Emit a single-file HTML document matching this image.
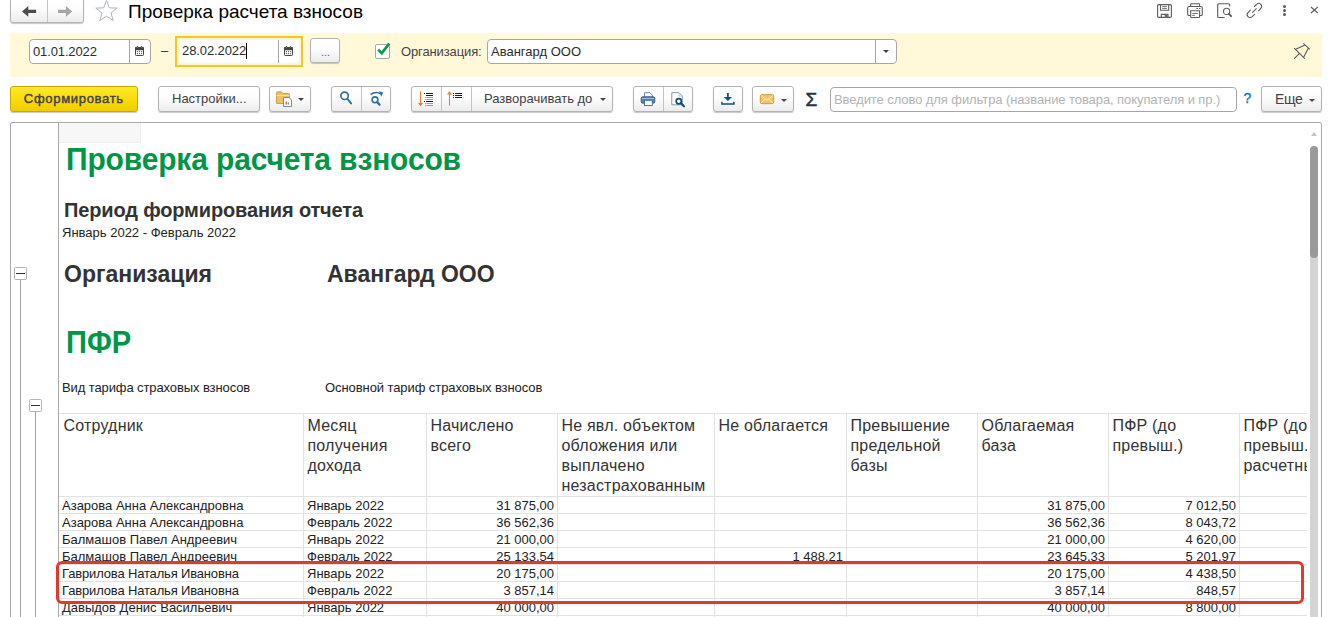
<!DOCTYPE html>
<html lang="ru">
<head>
<meta charset="utf-8">
<title>Проверка расчета взносов</title>
<style>
*{box-sizing:border-box;margin:0;padding:0}
html,body{width:1333px;height:617px;overflow:hidden;background:#fff}
body{position:relative;font-family:"Liberation Sans",Arial,sans-serif;font-size:13px;color:#333}
.abs{position:absolute}
.btn{position:absolute;border:1px solid #b3b3b3;border-radius:3px;background:linear-gradient(#ffffff 0%,#fdfdfd 45%,#ececec 100%);box-shadow:0 1px 1px rgba(0,0,0,.22);color:#3f3f3f;white-space:nowrap}
.btn .sep{position:absolute;top:0;bottom:0;width:1px;background:#c4c4c4}
.inp{position:absolute;background:#fff;border:1px solid #a6a6a6;border-radius:4px;white-space:nowrap}
.inp .sep{position:absolute;top:0;bottom:0;width:1px;background:#a6a6a6}
.txt{position:absolute;white-space:nowrap;line-height:16px}
.caret{position:absolute;width:0;height:0;border-left:3px solid transparent;border-right:3px solid transparent;border-top:3px solid #444}
svg{position:absolute;overflow:visible}
.h16{margin-left:-.5px;font-size:16px;line-height:20px;color:#333;position:absolute;white-space:nowrap;letter-spacing:.2px}
.row{position:absolute;left:59px;height:17px;width:1249px;border-bottom:1px solid #e2e2e2}
.c{position:absolute;top:1px;line-height:16px;font-size:13px;color:#222;white-space:nowrap}
.r{text-align:right}
.vl{position:absolute;width:1px;background:#e2e2e2;top:413px;height:204px}
</style>
</head>
<body>

<!-- title bar -->
<div class="btn" style="left:10px;top:-4px;width:74px;height:27px"><div class="sep" style="left:36px"></div>
<svg style="left:0;top:0" width="72" height="25" viewBox="0 0 72 25"><path d="M11 14.400 L17.300 9 L17.300 12.700 L25.100 12.700 L25.100 16.100 L17.300 16.100 L17.300 19.800 Z" fill="#4d4d4d"/><path d="M61.200 14.400 L54.900 9 L54.900 12.700 L47 12.700 L47 16.100 L54.900 16.100 L54.900 19.800 Z" fill="#a6a6a6"/></svg>
</div>
<svg style="left:94px;top:-.7px" width="25" height="23" viewBox="0 0 25 23"><path d="M12.5 1.5 L15.3 8.8 L23.2 9.1 L17 14 L19.2 21.5 L12.5 17.2 L5.8 21.5 L8 14 L1.8 9.1 L9.7 8.8 Z" fill="none" stroke="#aab4bf" stroke-width="1" stroke-linejoin="miter"/></svg>
<div class="txt" style="left:128px;top:0px;font-size:19px;line-height:24px;color:#000">Проверка расчета взносов</div>

<!-- top right icons -->
<svg id="ic-save" style="left:1157px;top:4px" width="15" height="14" viewBox="0 0 15 14" fill="none" stroke="#5c5c5c" stroke-width="1.1"><path d="M1.800 .6 H13.200 Q14.400 .6 14.400 1.800 V12.200 Q14.400 13.400 13.200 13.400 H1.800 Q.6 13.400 .6 12.200 V1.800 Q.6 .6 1.800 .6 Z"/><path d="M3.500 .6 V6.300 H11.700 V.6"/><path d="M5.200 2.600 H9.900 M5.200 4.400 H9.900" stroke-width=".9"/><path d="M4.300 13.400 V10.400 H11 V13.400"/><rect x="7.700" y="10.800" width="2.900" height="2.600" fill="#6a6a6a" stroke="none"/></svg>
<svg id="ic-print" style="left:1187px;top:3px" width="16" height="15" viewBox="0 0 16 15" fill="none" stroke="#5c5c5c" stroke-width="1.1"><path d="M3.700 3.400 V1.100 Q3.700 .7 4.100 .7 H12.200 Q12.600 .7 12.600 1.100 V3.400"/><path d="M3.700 12.500 H2 Q.7 12.500 .7 11.200 V4.800 Q.7 3.500 2 3.500 H14 Q15.300 3.500 15.300 4.800 V11.200 Q15.300 12.500 14 12.500 H12.600"/><path d="M3.700 7.700 H12.600 V13.700 Q12.600 14.500 11.800 14.500 H4.500 Q3.700 14.500 3.700 13.700 Z"/><path d="M5.300 10.500 H10.800 M5.300 12.400 H7.900" stroke-width=".9"/><path d="M9.400 5.500 H11 M12 5.500 H13.500" stroke-width=".9"/></svg>
<svg id="ic-prev" style="left:1217px;top:3px" width="15" height="15" viewBox="0 0 15 15" fill="none" stroke="#5c5c5c" stroke-width="1.1"><path d="M12.700 3.400 V1.700 Q12.700 .7 11.700 .7 H1.700 Q.7 .7 .7 1.700 V13.500 Q.7 14.500 1.700 14.500 H7.600"/><circle cx="9.600" cy="8.400" r="3.100"/><path d="M12 10.900 L14.100 13.100" stroke-width="2" stroke-linecap="round"/></svg>
<svg id="ic-link" style="left:1246px;top:2px" width="17" height="17" viewBox="0 0 17 17" fill="none" stroke="#585858" stroke-width="1.15" stroke-linecap="round"><g transform="translate(8.500 8.500) scale(.93) translate(-8.500 -8.300)"><path d="M8.300 4 L10.900 1.600 A3.100 3.100 0 0 1 15.300 6 L12.900 8.600"/><path d="M4.100 7.900 L1.600 10.500 A3.100 3.100 0 0 0 6 14.900 L8.700 12.500"/><path d="M6.400 10.400 L10.500 6.400"/></g></svg>
<svg id="ic-dots" style="left:1282px;top:4px" width="5" height="13" viewBox="0 0 5 13"><circle cx="2.500" cy="2.500" r="1.500" fill="#5c5c5c"/><circle cx="2.500" cy="6.500" r="1.500" fill="#5c5c5c"/><circle cx="2.500" cy="10.600" r="1.500" fill="#5c5c5c"/></svg>
<svg id="ic-close" style="left:1310px;top:6px" width="9" height="8" viewBox="0 0 9 8" stroke="#5c5c5c" stroke-width="1.1" fill="none"><path d="M1 1 L7.800 7 M7.800 1 L1 7"/></svg>

<!-- yellow band -->
<div class="abs" style="left:10px;top:33px;width:1312px;height:44px;background:#fff9da"></div>

<div class="inp" style="left:29px;top:39px;width:122px;height:25px"><div class="sep" style="left:99px"></div>
<div class="txt" style="left:3px;top:4px;color:#2b2b2b;letter-spacing:-.13px">01.01.2022</div>
<svg class="cal" style="left:105px;top:6px" width="9" height="10" viewBox="0 0 9 10"><rect x=".5" y="1.600" width="8" height="7.900" rx=".8" fill="#fff" stroke="#444" stroke-width="1"/><rect x="0" y="1.200" width="9" height="3" fill="#444"/><rect x="1.700" y="0" width="1.500" height="2" rx=".7" fill="#444"/><rect x="5.800" y="0" width="1.500" height="2" rx=".7" fill="#444"/><circle cx="2.450" cy="1.100" r=".4" fill="#fff"/><circle cx="6.550" cy="1.100" r=".4" fill="#fff"/><g fill="#444"><circle cx="2.400" cy="5.600" r=".6"/><circle cx="4.500" cy="5.600" r=".6"/><circle cx="6.600" cy="5.600" r=".6"/><circle cx="2.400" cy="7.600" r=".6"/><circle cx="4.500" cy="7.600" r=".6"/><circle cx="6.600" cy="7.600" r=".6"/></g></svg>
</div>
<div class="txt" style="left:161px;top:43px;color:#333">–</div>

<div class="abs" style="left:175px;top:36px;width:128px;height:31px;border:2px solid #f8c622;background:#fef6d2"></div>
<div class="abs" style="left:179px;top:40px;width:120px;height:23px;background:#fff;border-radius:3px"><div class="abs" style="left:99px;top:0;bottom:0;width:1px;background:#a6a6a6"></div>
<div class="txt" style="left:3px;top:3px;color:#2b2b2b;letter-spacing:-.1px">28.02.2022</div>
<div class="abs" style="left:67px;top:3px;width:1px;height:16px;background:#000"></div>
<svg class="cal" style="left:105px;top:6px" width="9" height="10" viewBox="0 0 9 10"><rect x=".5" y="1.600" width="8" height="7.900" rx=".8" fill="#fff" stroke="#444" stroke-width="1"/><rect x="0" y="1.200" width="9" height="3" fill="#444"/><rect x="1.700" y="0" width="1.500" height="2" rx=".7" fill="#444"/><rect x="5.800" y="0" width="1.500" height="2" rx=".7" fill="#444"/><circle cx="2.450" cy="1.100" r=".4" fill="#fff"/><circle cx="6.550" cy="1.100" r=".4" fill="#fff"/><g fill="#444"><circle cx="2.400" cy="5.600" r=".6"/><circle cx="4.500" cy="5.600" r=".6"/><circle cx="6.600" cy="5.600" r=".6"/><circle cx="2.400" cy="7.600" r=".6"/><circle cx="4.500" cy="7.600" r=".6"/><circle cx="6.600" cy="7.600" r=".6"/></g></svg>
</div>

<div class="btn" style="left:310px;top:38px;width:30px;height:25px"><div class="txt" style="left:10px;top:5px;font-size:11px;color:#666">...</div></div>

<div class="abs" style="left:375px;top:44px;width:15px;height:15px;background:#fff;border:1px solid #a6a6a6;border-radius:2px"></div>
<svg style="left:377px;top:42px" width="14" height="14" viewBox="0 0 14 14"><path d="M1.200 7.600 L4.800 11.200 L12.300 1.500" fill="none" stroke="#0b9a48" stroke-width="2.700"/></svg>
<div class="txt" style="left:401px;top:43.500px;color:#444;letter-spacing:-.12px">Организация:</div>
<div class="inp" style="left:487px;top:39px;width:410px;height:25px"><div class="sep" style="left:387px"></div>
<div class="txt" style="left:3px;top:4px;color:#2b2b2b">Авангард ООО</div>
<div class="caret" style="left:395px;top:10px"></div></div>

<svg id="ic-pin" style="left:1293px;top:43px" width="18" height="17" viewBox="0 0 18 17" fill="none" stroke="#5c5c5c" stroke-width="1.100"><path d="M10.300 .4 L16.800 6.400 M12.100 2 L2.200 6.400 M15.300 5.200 L10.300 14.800 M1.200 5.200 L11.800 15.600 M6.300 10.600 L1.200 15.600"/></svg>

<!-- toolbar -->
<div class="btn" style="left:10px;top:86px;width:128px;height:26px;border-color:#c9a900;background:linear-gradient(#ffe92e 0%,#fbdc07 50%,#f2cd00 100%);font-weight:normal;color:#3f4452"><div class="txt" style="left:12.800px;top:4px;letter-spacing:.7px;-webkit-text-stroke:.45px #3f4452">Сформировать</div></div>
<div class="btn" style="left:158px;top:86px;width:102px;height:26px"><div class="txt" style="left:13px;top:4px">Настройки...</div></div>
<div class="btn" style="left:269px;top:86px;width:42px;height:26px"><div class="caret" style="left:28px;top:11px"></div>
<svg id="ic-folder" style="left:6px;top:4px" width="17" height="16" viewBox="0 0 17 16"><path d="M.5 2.500 Q.5 .8 2 .8 H5.500 L7 2.500 H12.500 Q13.500 2.500 13.500 3.500 V12.500 H.5 Z" fill="#ecc06a" stroke="#c8963c" stroke-width=".9"/><path d="M.5 4.500 H13.500" stroke="#f7dfa3" stroke-width="1"/><path d="M7.500 6.500 H13 L15.500 9 V15.500 H7.500 Z" fill="#fff" stroke="#6f7f92" stroke-width=".9"/><path d="M10.300 13.500 V10.500" stroke="#d9453c" stroke-width="1.200"/><path d="M12.300 13.500 V11.500" stroke="#3fa55a" stroke-width="1.200"/></svg></div>

<div class="btn" style="left:331px;top:86px;width:60px;height:26px"><div class="sep" style="left:29px"></div>
<svg id="ic-find" style="left:0;top:0" width="30" height="24" viewBox="0 0 30 24" fill="none" stroke="#2a70a8"><circle cx="12.600" cy="8.800" r="3.700" stroke-width="1.700"/><path d="M15.600 12 L19 16.400" stroke-width="2" stroke-linecap="round"/></svg>
<svg id="ic-find2" style="left:0;top:0" width="60" height="24" viewBox="0 0 60 24" fill="none" stroke="#2a70a8"><circle cx="43" cy="12.800" r="2.900" stroke-width="1.600"/><path d="M45.200 15.200 L47.600 17.600" stroke-width="2.200" stroke-linecap="round"/><path d="M38.600 7.700 Q43.500 3.600 48.800 6.800" stroke-width="1.500"/><path d="M46.800 4.300 L51.200 5.600 L49.300 9.600 Z" fill="#2a70a8" stroke="none"/></svg></div>

<div class="btn" style="left:411px;top:86px;width:202px;height:26px"><div class="sep" style="left:29px"></div><div class="sep" style="left:59px"></div>
<svg id="ic-s1" style="left:0;top:0" width="30" height="24" viewBox="0 0 30 24"><path d="M8.500 4.300 V17" stroke="#ee7a3f" stroke-width="1.100"/><path d="M5.900 16 L8.500 19.300 L11.100 16 Z" fill="#ee7a3f"/><path d="M14 6.500 H21 M14 8.500 H21 M14 14.500 H21" stroke="#1c1c1c" stroke-width="1"/><path d="M12 6.500 H13 M12 14.500 H13" stroke="#1c1c1c" stroke-width="1"/><path d="M15 10.500 H21 M15 12.500 H21 M15 16.500 H21 M15 18.500 H21" stroke="#9a9a9a" stroke-width="1"/><path d="M13.500 10.500 H14.300 M13.500 12.500 H14.300 M13.500 16.500 H14.300 M13.500 18.500 H14.300" stroke="#555" stroke-width="1"/></svg>
<svg id="ic-s2" style="left:0;top:0" width="60" height="24" viewBox="0 0 60 24"><path d="M37.500 6.500 V18.700" stroke="#ee7a3f" stroke-width="1.100"/><path d="M34.900 7.500 L37.500 4.200 L40.100 7.500 Z" fill="#ee7a3f"/><path d="M43 6.500 H50 M43 8.500 H50 M43 10.500 H50" stroke="#1c1c1c" stroke-width="1"/><path d="M41 6.500 H42 M41 8.500 H42 M41 10.500 H42" stroke="#1c1c1c" stroke-width="1"/></svg>
<div class="txt" style="left:72px;top:4px">Разворачивать до</div><div class="caret" style="left:188px;top:11px"></div></div>

<div class="btn" style="left:633px;top:86px;width:60px;height:26px"><div class="sep" style="left:29px"></div>
<svg id="ic-p1" style="left:0;top:0" width="30" height="24" viewBox="0 0 30 24"><path d="M10.500 10 V5.700 H16 L18.300 8 V10" fill="#fff" stroke="#5b7fa8" stroke-width=".9"/><rect x="7.200" y="9.800" width="13.600" height="6.400" rx="1.600" fill="#5a84b4" stroke="#2d527f" stroke-width=".9"/><path d="M8 11.500 H20" stroke="#a9c3df" stroke-width=".9"/><rect x="10.500" y="13.300" width="7.800" height="5.200" fill="#fff" stroke="#3f6694" stroke-width=".9"/></svg>
<svg id="ic-p2" style="left:0;top:0" width="60" height="24" viewBox="0 0 60 24"><path d="M37.800 5.700 H45 L48.300 9 V17.800 H37.800 Z" fill="#fff" stroke="#7d8da0" stroke-width=".9"/><path d="M45 5.700 V9 H48.300" fill="none" stroke="#b5bfca" stroke-width=".8"/><circle cx="44.800" cy="14.200" r="2.600" fill="#fff" stroke="#0d4d80" stroke-width="1.700"/><path d="M46.900 16.300 L50 19.300" stroke="#0d4d80" stroke-width="2.100" stroke-linecap="round"/></svg></div>

<div class="btn" style="left:713px;top:86px;width:30px;height:26px">
<svg id="ic-dl" style="left:0;top:0" width="30" height="24" viewBox="0 0 30 24" fill="none" stroke="#0d4d80"><path d="M13.900 6 V11" stroke-width="1.800"/><path d="M9.800 10 L13.900 14 L18 10 Z" fill="#0d4d80" stroke="none"/><path d="M7.900 14.800 V17 H19.900 V14.800" stroke-width="1.500"/></svg></div>

<div class="btn" style="left:752px;top:86px;width:42px;height:26px"><div class="caret" style="left:28px;top:12px"></div>
<svg id="ic-mail" style="left:0;top:0" width="30" height="24" viewBox="0 0 30 24"><rect x="7.300" y="7.700" width="13.400" height="9" rx="1.600" fill="#f3c468" stroke="#d39a32" stroke-width="1"/><path d="M8 8.500 L14 13.300 L20 8.500 M8 16 L12.300 12 M20 16 L15.700 12" fill="none" stroke="#fdf0cf" stroke-width=".9"/></svg></div>

<div class="txt" id="sigma" style="left:805.5px;top:88px;font-size:19px;line-height:24px;font-weight:normal;-webkit-text-stroke:.55px #1f3345;color:#1f3345">Σ</div>

<div class="inp" style="left:830px;top:87px;width:407px;height:25px"><div class="txt" style="left:3px;top:4px;color:#b4b4b4;letter-spacing:-.08px">Введите слово для фильтра (название товара, покупателя и пр.)</div></div>
<div class="txt" style="left:1243.500px;top:90px;color:#1473c6;font-weight:normal;-webkit-text-stroke:.35px #1473c6;font-size:14px">?</div>
<div class="btn" style="left:1261px;top:86px;width:61px;height:26px"><div class="txt" style="left:13px;top:4px;font-size:14px;letter-spacing:-.3px;color:#444">Еще</div><div class="caret" style="left:47px;top:12px"></div></div>

<!-- report frame -->
<div class="abs" style="left:10px;top:122px;width:1312px;height:500px;border:1px solid #a9a9a9;border-radius:2px;background:#fff"></div>
<div class="abs" style="left:58px;top:122px;width:1px;height:495px;background:#a9a9a9"></div>
<div class="abs" style="left:59px;top:123px;width:82px;height:20px;background:#f7f7f7;border-right:1px solid #efefef;border-bottom:1px solid #efefef"></div>

<!-- tree -->
<div class="abs" style="left:20px;top:280px;width:1px;height:337px;background:#a0a0a0"></div>
<div class="abs" style="left:14px;top:267px;width:13px;height:13px;border:1px solid #b4b4b4;border-radius:1.5px;background:#fff"><div class="abs" style="left:1px;top:5px;width:9px;height:1px;background:#333"></div></div>
<div class="abs" style="left:35px;top:412px;width:1px;height:205px;background:#a0a0a0"></div>
<div class="abs" style="left:29px;top:399px;width:13px;height:13px;border:1px solid #b4b4b4;border-radius:1.5px;background:#fff"><div class="abs" style="left:1px;top:5px;width:9px;height:1px;background:#333"></div></div>

<!-- scrollbar -->
<div class="abs" style="left:1310px;top:150px;width:8px;height:467px;background:#d4d4d4"></div>
<div class="abs" style="left:1310px;top:146px;width:8px;height:112px;background:#9a9a9a;border-radius:4px"></div>
<div class="abs" style="left:1311px;top:132px;width:0;height:0;border-left:3px solid transparent;border-right:3px solid transparent;border-bottom:4px solid #c2c2c2"></div>

<!-- report headings -->
<div class="txt" id="h1" style="letter-spacing:-.15px;transform:scale(1,1.03);transform-origin:0 28.400px;left:66px;top:142px;font-size:30px;line-height:36px;font-weight:bold;color:#009646">Проверка расчета взносов</div>
<div class="txt" id="h2" style="letter-spacing:-.15px;left:64px;top:198px;font-size:20px;line-height:24px;font-weight:bold;color:#333">Период формирования отчета</div>
<div class="txt" id="h3" style="left:62px;top:225px;font-size:13px;color:#222">Январь 2022 - Февраль 2022</div>
<div class="txt" id="h4" style="left:64px;top:260px;font-size:23px;line-height:28px;font-weight:bold;color:#333">Организация</div>
<div class="txt" id="h5" style="left:327px;top:260px;font-size:23px;line-height:28px;font-weight:bold;color:#333">Авангард ООО</div>
<div class="txt" id="h6" style="transform:scale(.97,1.04);transform-origin:0 28.400px;left:66.100px;top:324.700px;font-size:30px;line-height:36px;font-weight:bold;color:#009646">ПФР</div>
<div class="txt" id="h7" style="letter-spacing:-.1px;left:62px;top:380px;font-size:13px;color:#222">Вид тарифа страховых взносов</div>
<div class="txt" id="h8" style="letter-spacing:-.08px;left:325px;top:380px;font-size:13px;color:#222">Основной тариф страховых взносов</div>

<!-- table -->
<div id="tbl" class="abs" style="left:0;top:0;width:1307px;height:617px;overflow:hidden">
<div class="abs" style="left:59px;top:413px;width:1249px;height:1px;background:#e2e2e2"></div>
<div class="abs" style="left:59px;top:496px;width:1249px;height:1px;background:#e2e2e2"></div>
<div class="vl" style="left:303px"></div><div class="vl" style="left:426px"></div><div class="vl" style="left:557px"></div><div class="vl" style="left:714px"></div><div class="vl" style="left:846px"></div><div class="vl" style="left:977px"></div><div class="vl" style="left:1108px"></div><div class="vl" style="left:1239px"></div>

<div class="h16" style="left:64px;top:416px">Сотрудник</div>
<div class="h16" style="left:308px;top:416px">Месяц<br>получения<br>дохода</div>
<div class="h16" style="left:431px;top:416px">Начислено<br>всего</div>
<div class="h16" style="left:562px;top:416px">Не явл. объектом<br>обложения или<br>выплачено<br>незастрахованным</div>
<div class="h16" style="left:719px;top:416px">Не облагается</div>
<div class="h16" style="left:851px;top:416px">Превышение<br>предельной<br>базы</div>
<div class="h16" style="left:982px;top:416px">Облагаемая<br>база</div>
<div class="h16" style="left:1113px;top:416px">ПФР (до<br>превыш.)</div>
<div class="h16" style="left:1244px;top:416px">ПФР (до<br>превыш.)<br>расчетный</div>

<div class="row" style="top:497px"><span class="c" style="left:3px">Азарова Анна Александровна</span><span class="c" style="left:248px">Январь 2022</span><span class="c r" style="right:754px">31 875,00</span><span class="c r" style="right:203px">31 875,00</span><span class="c r" style="right:72px">7 012,50</span></div>
<div class="row" style="top:514px"><span class="c" style="left:3px">Азарова Анна Александровна</span><span class="c" style="left:248px">Февраль 2022</span><span class="c r" style="right:754px">36 562,36</span><span class="c r" style="right:203px">36 562,36</span><span class="c r" style="right:72px">8 043,72</span></div>
<div class="row" style="top:531px"><span class="c" style="left:3px">Балмашов Павел Андреевич</span><span class="c" style="left:248px">Январь 2022</span><span class="c r" style="right:754px">21 000,00</span><span class="c r" style="right:203px">21 000,00</span><span class="c r" style="right:72px">4 620,00</span></div>
<div class="row" style="top:548px"><span class="c" style="left:3px">Балмашов Павел Андреевич</span><span class="c" style="left:248px">Февраль 2022</span><span class="c r" style="right:754px">25 133,54</span><span class="c r" style="right:465px">1 488,21</span><span class="c r" style="right:203px">23 645,33</span><span class="c r" style="right:72px">5 201,97</span></div>
<div class="row" style="top:565px"><span class="c" style="left:3px;letter-spacing:-.16px">Гаврилова Наталья Ивановна</span><span class="c" style="left:248px">Январь 2022</span><span class="c r" style="right:754px">20 175,00</span><span class="c r" style="right:203px">20 175,00</span><span class="c r" style="right:72px">4 438,50</span></div>
<div class="row" style="top:582px"><span class="c" style="left:3px;letter-spacing:-.16px">Гаврилова Наталья Ивановна</span><span class="c" style="left:248px">Февраль 2022</span><span class="c r" style="right:754px">3 857,14</span><span class="c r" style="right:203px">3 857,14</span><span class="c r" style="right:72px">848,57</span></div>
<div class="row" style="top:599px"><span class="c" style="left:3px">Давыдов Денис Васильевич</span><span class="c" style="left:248px">Январь 2022</span><span class="c r" style="right:754px">40 000,00</span><span class="c r" style="right:203px">40 000,00</span><span class="c r" style="right:72px">8 800,00</span></div>
</div>

<!-- red highlight -->
<div class="abs" style="left:56px;top:561px;width:1248px;height:43px;border:3px solid #e2382d;border-radius:6px"></div>

</body>
</html>
